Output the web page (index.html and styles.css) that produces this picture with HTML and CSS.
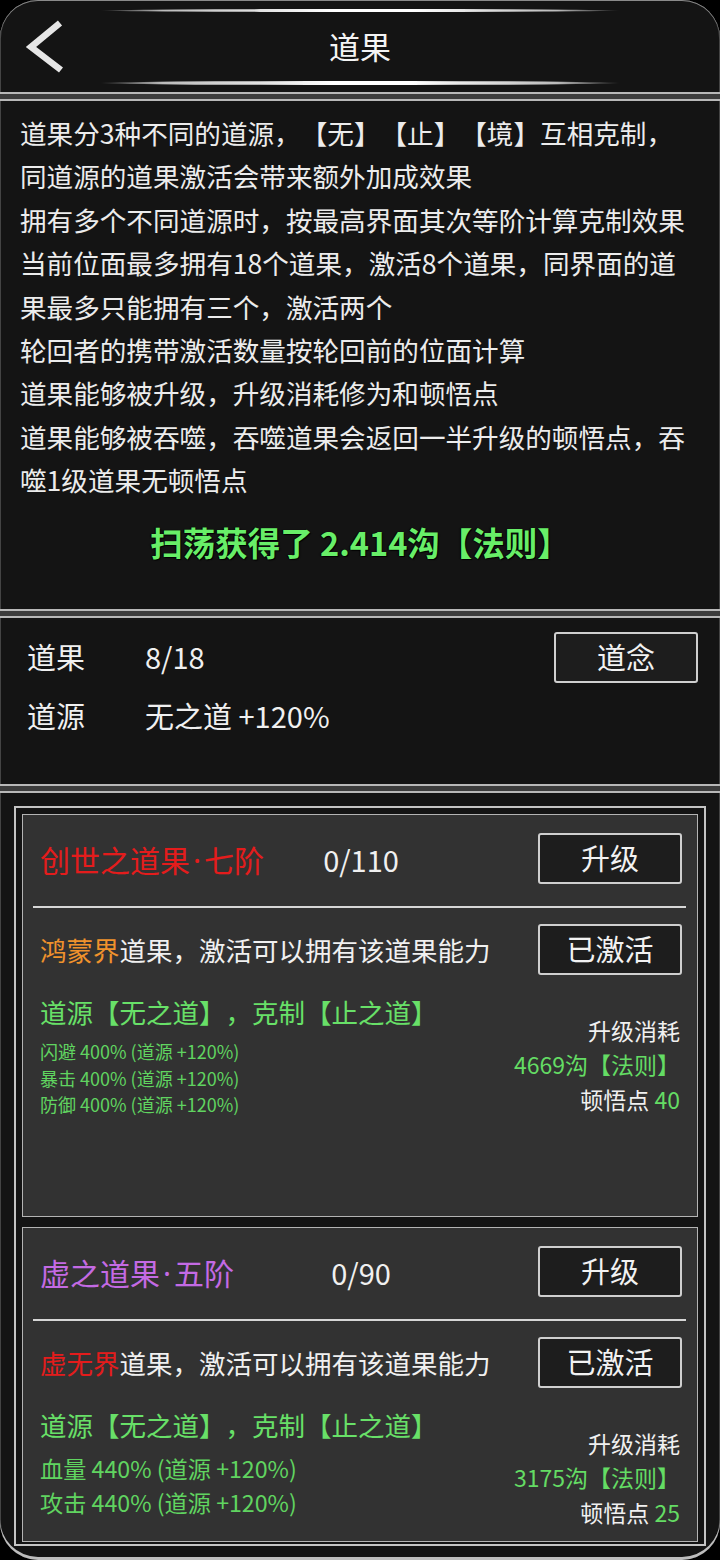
FILE: index.html
```html
<!DOCTYPE html>
<html lang="zh-CN">
<head>
<meta charset="utf-8">
<title>道果</title>
<link rel="stylesheet" href="styles.css">
</head>
<body>
<div class="app">
  <header class="topbar">
    <div class="deco deco-top"></div>
    <div class="title-row">
      <button class="back" aria-label="返回">
        <svg width="44" height="62" viewBox="0 0 44 62"><polyline points="36,7 7,31 37,54" fill="none" stroke="#e6e6e6" stroke-width="6.5" stroke-linecap="butt" stroke-linejoin="miter"/></svg>
      </button>
      <h1 class="title">道果</h1>
      <span></span>
    </div>
    <div class="deco deco-bottom"></div>
  </header>

  <div class="sep"></div>

  <section class="intro">
    <div class="intro-text">
      <span class="line">道果分3种不同的道源，【无】【止】【境】互相克制，</span>
      <span class="line">同道源的道果激活会带来额外加成效果</span>
      <span class="line">拥有多个不同道源时，按最高界面其次等阶计算克制效果</span>
      <span class="line">当前位面最多拥有18个道果，激活8个道果，同界面的道</span>
      <span class="line">果最多只能拥有三个，激活两个</span>
      <span class="line">轮回者的携带激活数量按轮回前的位面计算</span>
      <span class="line">道果能够被升级，升级消耗修为和顿悟点</span>
      <span class="line">道果能够被吞噬，吞噬道果会返回一半升级的顿悟点，吞</span>
      <span class="line">噬1级道果无顿悟点</span>
    </div>
    <p class="reward">扫荡获得了 2.414沟【法则】</p>
  </section>

  <div class="sep"></div>

  <section class="stats">
    <div class="stat-row">
      <span class="stat-label">道果</span>
      <span class="stat-value">8/18</span>
      <button class="btn">道念</button>
    </div>
    <div class="stat-row">
      <span class="stat-label">道源</span>
      <span class="stat-value">无之道 +120%</span>
    </div>
  </section>

  <div class="sep"></div>

  <section class="list">
    <div class="frame">
      <div class="card card-tall">
        <div class="card-head">
          <span class="card-name red">创世之道果<span class="dot">·</span>七阶</span>
          <span class="card-count">0/110</span>
          <button class="btn btn-right">升级</button>
        </div>
        <div class="divider"></div>
        <div class="card-row">
          <span class="card-desc"><span class="orange">鸿蒙界</span>道果，激活可以拥有该道果能力</span>
          <button class="btn">已激活</button>
        </div>
        <div class="card-body">
          <div class="card-left">
            <div class="source">道源【无之道】，克制【止之道】</div>
            <div class="effects">
              <div>闪避 400% (道源 +120%)</div>
              <div>暴击 400% (道源 +120%)</div>
              <div>防御 400% (道源 +120%)</div>
            </div>
          </div>
          <div class="cost">
            <div>升级消耗</div>
            <div class="green">4669沟【法则】</div>
            <div>顿悟点 <span class="green">40</span></div>
          </div>
        </div>
      </div>

      <div class="card card-fill">
        <div class="card-head">
          <span class="card-name purple">虚之道果<span class="dot">·</span>五阶</span>
          <span class="card-count">0/90</span>
          <button class="btn btn-right">升级</button>
        </div>
        <div class="divider"></div>
        <div class="card-row">
          <span class="card-desc"><span class="red">虚无界</span>道果，激活可以拥有该道果能力</span>
          <button class="btn">已激活</button>
        </div>
        <div class="card-body">
          <div class="card-left">
            <div class="source">道源【无之道】，克制【止之道】</div>
            <div class="effects effects-lg">
              <div>血量 440% (道源 +120%)</div>
              <div>攻击 440% (道源 +120%)</div>
            </div>
          </div>
          <div class="cost">
            <div>升级消耗</div>
            <div class="green">3175沟【法则】</div>
            <div>顿悟点 <span class="green">25</span></div>
          </div>
        </div>
      </div>
    </div>
  </section>
</div>
</body>
</html>
```

FILE: styles.css
```css
* { box-sizing: border-box; }

html, body {
  margin: 0;
  padding: 0;
  background: #000;
}

body {
  font-family: "Noto Sans CJK SC", "Noto Sans", sans-serif;
  color: #f0f0f0;
  text-spacing-trim: space-all;
}

.app {
  width: 720px;
  height: 1560px;
  background: #141414;
  border-radius: 38px;
  overflow: hidden;
  display: flex;
  flex-direction: column;
  box-shadow: inset 0 1px 0 #8a8a8a, inset 0 -3px 0 #bdbdbd, inset 1px 0 0 #444, inset -1px 0 0 #444;
}

/* header */
.topbar {
  height: 92px;
  padding-top: 9px;
  display: flex;
  flex-direction: column;
  align-items: center;
  flex: none;
}

.deco {
  width: 520px;
  border-radius: 50%;
  background: linear-gradient(90deg, rgba(255,255,255,0) 0%, #bbb 12%, #fff 45%, #fff 60%, #bbb 88%, rgba(255,255,255,0) 100%);
}
.deco-top { height: 3px; }
.deco-bottom { height: 4px; }

.title-row {
  width: 100%;
  height: 69px;
  display: grid;
  grid-template-columns: 1fr auto 1fr;
  align-items: center;
}

.back {
  justify-self: start;
  margin-left: 24px;
  padding: 0;
  border: none;
  background: none;
  display: flex;
}

.title {
  margin: 0 0 3px 0;
  font-size: 31px;
  font-weight: 400;
  color: #f4f4f4;
  line-height: 1;
}

/* separators */
.sep {
  flex: none;
  height: 9px;
  border-top: 2px solid #b8b8b8;
  border-bottom: 2px solid #b8b8b8;
  background: #3c3c3c;
}

/* intro */
.intro {
  flex: none;
  height: 508px;
  padding: 10px 20px 0 20px;
}

.intro-text {
  font-size: 26.6px;
  line-height: 43.4px;
  color: #ececec;
}

.line {
  display: block;
  white-space: nowrap;
}

.reward {
  margin: 18px 0 0 0;
  text-align: center;
  font-size: 32.5px;
  font-weight: 700;
  line-height: 44px;
  color: #68ee68;
  white-space: nowrap;
  text-shadow: 1px 1px 1px #000, -1px 0 1px #000;
}

/* stats */
.stats {
  flex: none;
  height: 166px;
  padding: 14px 22px 0 27px;
  display: flex;
  flex-direction: column;
  gap: 8px;
}

.stat-row {
  display: flex;
  align-items: center;
  min-height: 51px;
  font-size: 29px;
  line-height: 40px;
}

.stat-label {
  width: 118px;
  flex: none;
  padding-bottom: 4px;
}

.stat-value {
  flex: 1;
  padding-bottom: 4px;
}

.btn {
  flex: none;
  width: 144px;
  height: 51px;
  border: 2px solid #cfcfcf;
  border-radius: 3px;
  background: #1d1d1d;
  color: #f2f2f2;
  font-family: "Noto Sans CJK SC", "Noto Sans", sans-serif;
  font-size: 29px;
  line-height: 1;
  padding: 0 0 2px 0;
  display: flex;
  align-items: center;
  justify-content: center;
}

/* list */
.list {
  flex: none;
  padding: 13px 14px 0 14px;
}

.frame {
  height: 740px;
  border: 2px solid #c4c4c4;
  padding: 6px 6px 2px 6px;
  display: flex;
  flex-direction: column;
  gap: 10px;
  overflow: hidden;
}

.card {
  background: #323232;
  border: 1px solid #b4b4b4;
  padding: 18px 11px 0 10px;
}

.card-tall {
  flex: none;
  height: 403px;
}

.card-fill {
  flex: 1;
  min-height: 0;
}

.card-head {
  display: grid;
  grid-template-columns: 1fr auto 1fr;
  align-items: center;
  padding: 0 4px 0 7px;
}

.card-name {
  font-size: 30px;
  white-space: nowrap;
}

.dot {
  font-family: "Noto Sans", "DejaVu Sans", sans-serif;
  margin: 0 3px;
}

.card-count {
  font-size: 29px;
  color: #f0f0f0;
}

.btn-right {
  justify-self: end;
}

.divider {
  height: 2px;
  margin-top: 22px;
  background: #d6d6d6;
}

.card-row {
  margin-top: 16px;
  display: flex;
  align-items: center;
  justify-content: space-between;
  padding: 0 4px 0 7px;
}

.card-desc {
  font-size: 26.5px;
  color: #f0f0f0;
  white-space: nowrap;
}

.card-body {
  margin-top: 19px;
  display: flex;
  justify-content: space-between;
  padding: 0 6px 0 7px;
}

.source {
  font-size: 26.5px;
  line-height: 36px;
  color: #68e068;
  white-space: nowrap;
}

.effects {
  margin-top: 8px;
  font-size: 18px;
  line-height: 26.5px;
  color: #60d460;
  white-space: nowrap;
}

.effects-lg {
  font-size: 23.2px;
  line-height: 34px;
}

.cost {
  padding-top: 19px;
  text-align: right;
  font-size: 23px;
  line-height: 34.3px;
  color: #f0f0f0;
  white-space: nowrap;
}

.red { color: #e41c1c; }
.purple { color: #c46ae4; }
.orange { color: #f0922c; }
.green { color: #64dc64; }
```
